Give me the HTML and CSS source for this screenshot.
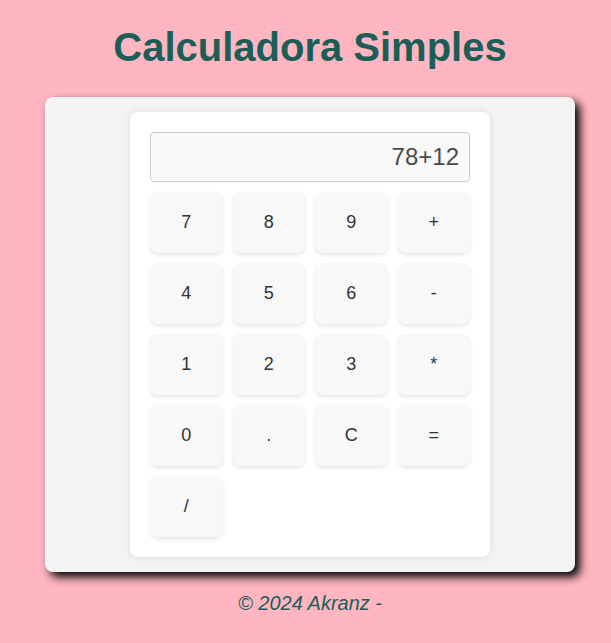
FILE: index.html
```html
<!DOCTYPE html>
<html lang="pt">
<head>
<meta charset="utf-8">
<title>Calculadora Simples</title>
<link rel="stylesheet" href="styles.css">
</head>
<body>
<div class="page">
  <h1 class="title">Calculadora Simples</h1>
  <div class="container">
    <div class="calculator">
      <input class="display" type="text" value="78+12" readonly>
      <div class="keys">
        <button class="key">7</button>
        <button class="key">8</button>
        <button class="key">9</button>
        <button class="key">+</button>
        <button class="key">4</button>
        <button class="key">5</button>
        <button class="key">6</button>
        <button class="key">-</button>
        <button class="key">1</button>
        <button class="key">2</button>
        <button class="key">3</button>
        <button class="key">*</button>
        <button class="key">0</button>
        <button class="key">.</button>
        <button class="key">C</button>
        <button class="key">=</button>
        <button class="key">/</button>
      </div>
    </div>
  </div>
  <footer class="footer">© 2024 Akranz -</footer>
</div>
</body>
</html>
```
FILE: styles.css
```css
html, body {
  margin: 0;
  padding: 0;
}
body {
  background: #ffb6c1;
  font-family: "Liberation Sans", Arial, sans-serif;
  min-height: 643px;
}
.page {
  padding-left: 9px;
  display: flex;
  flex-direction: column;
  align-items: center;
}
.title {
  margin: 24px 0 27px;
  font-size: 40px;
  line-height: 46px;
  font-weight: bold;
  color: #1b5e57;
  text-align: center;
}
.container {
  box-sizing: border-box;
  width: 530px;
  padding: 15px;
  background: #f4f4f4;
  border-radius: 8px;
  box-shadow: 5px 5px 10px #000000;
}
.calculator {
  box-sizing: border-box;
  width: 360px;
  margin: 0 auto;
  padding: 20px;
  background: #ffffff;
  border-radius: 8px;
  box-shadow: 0 0 10px rgba(0, 0, 0, 0.1);
}
.display {
  display: block;
  box-sizing: border-box;
  width: 100%;
  height: 50px;
  margin: 0 0 10px;
  padding: 10px;
  border: 1px solid #cccccc;
  border-radius: 4px;
  background: #f9f9f9;
  font-family: "Liberation Sans", Arial, sans-serif;
  font-size: 24px;
  color: #4a4a4a;
  text-align: right;
  outline: none;
}
.keys {
  display: grid;
  grid-template-columns: repeat(4, 1fr);
  gap: 10px;
}
.key {
  height: 61px;
  padding: 0;
  border: none;
  border-radius: 8px;
  background: #f8f8f8;
  box-shadow: 0 2px 4px rgba(0, 0, 0, 0.1);
  font-family: "Liberation Sans", Arial, sans-serif;
  font-size: 18px;
  color: #333333;
}
.footer {
  margin-top: 20px;
  font-size: 20px;
  line-height: 23px;
  font-style: italic;
  color: #1b5e57;
}
```
